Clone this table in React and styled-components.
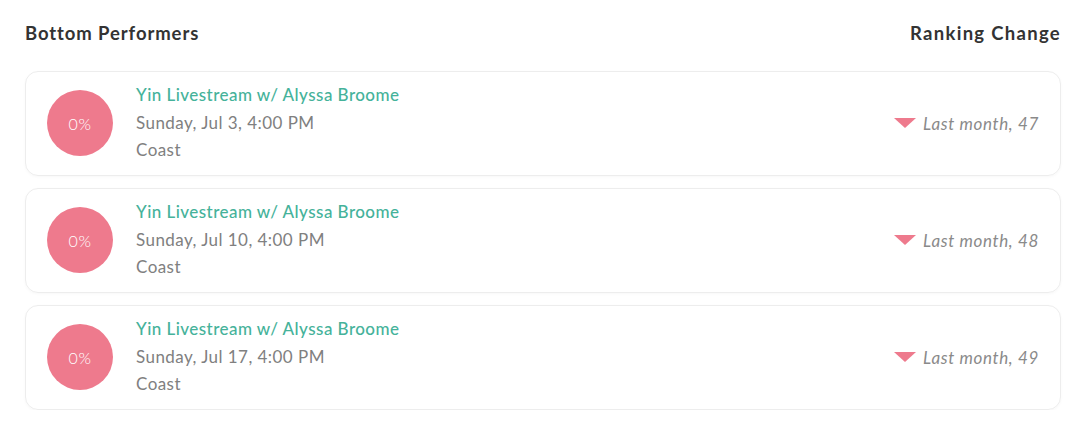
import React from "react";
import styled, { createGlobalStyle } from "styled-components";

const Global = createGlobalStyle`
  html, body { margin: 0; padding: 0; background: #fff; }
  body { font-family: Lato, "Open Sans", sans-serif; }
`;

const Wrap = styled.div`
  padding: 20px 29px 0 25px;
  display: flex;
  flex-direction: column;
`;

const Header = styled.div`
  display: flex;
  justify-content: space-between;
  align-items: center;
  height: 26px;
  margin-bottom: 25px;
`;

const HeaderTitle = styled.h2`
  margin: 0;
  font-size: 18.5px;
  font-weight: 700;
  color: #333;
  letter-spacing: ${(p) => (p.$wide ? "1.3px" : "0.9px")};
`;

const List = styled.div`
  display: flex;
  flex-direction: column;
  gap: 12px;
`;

const Card = styled.div`
  box-sizing: border-box;
  height: 105px;
  border: 1px solid #ededed;
  border-radius: 13px;
  display: flex;
  align-items: center;
  padding: 0 21px 0 21px;
  box-shadow: 0 1px 3px rgba(0, 0, 0, 0.03);
`;

const Circle = styled.div`
  width: 66px;
  height: 66px;
  margin-top: -1px;
  border-radius: 50%;
  background: #ee7a8d;
  color: #fff;
  display: flex;
  align-items: center;
  justify-content: center;
  font-size: 16px;
  font-weight: 300;
  letter-spacing: 0.5px;
  flex-shrink: 0;
`;

const Info = styled.div`
  display: flex;
  flex-direction: column;
  margin-left: 23px;
  margin-top: -2px;
  flex: 1;
`;

const Line = styled.div`
  font-size: 17px;
  line-height: 27.5px;
  letter-spacing: 0.45px;
  color: ${(p) => (p.$accent ? "#45b29a" : "#808080")};
  font-weight: ${(p) => (p.$accent ? 500 : 400)};
`;

const Change = styled.div`
  display: flex;
  align-items: center;
  gap: 7px;
  margin-top: -1px;
  font-style: italic;
  font-size: 17px;
  letter-spacing: 0.65px;
  color: #8a8a8a;
`;

const Arrow = styled.svg`
  width: 22px;
  height: 10px;
  display: block;
`;

const rows = [
  { date: "Sunday, Jul 3, 4:00 PM", rank: 47 },
  { date: "Sunday, Jul 10, 4:00 PM", rank: 48 },
  { date: "Sunday, Jul 17, 4:00 PM", rank: 49 },
];

export default function App() {
  return (
    <>
      <Global />
      <Wrap>
        <Header>
          <HeaderTitle>Bottom Performers</HeaderTitle>
          <HeaderTitle $wide>Ranking Change</HeaderTitle>
        </Header>
        <List>
          {rows.map((r) => (
            <Card key={r.rank}>
              <Circle>0%</Circle>
              <Info>
                <Line $accent>Yin Livestream w/ Alyssa Broome</Line>
                <Line>{r.date}</Line>
                <Line>Coast</Line>
              </Info>
              <Change>
                <Arrow viewBox="0 0 22 10">
                  <polygon points="0,0 22,0 11,10" fill="#ee7a8d" />
                </Arrow>
                Last month, {r.rank}
              </Change>
            </Card>
          ))}
        </List>
      </Wrap>
    </>
  );
}
